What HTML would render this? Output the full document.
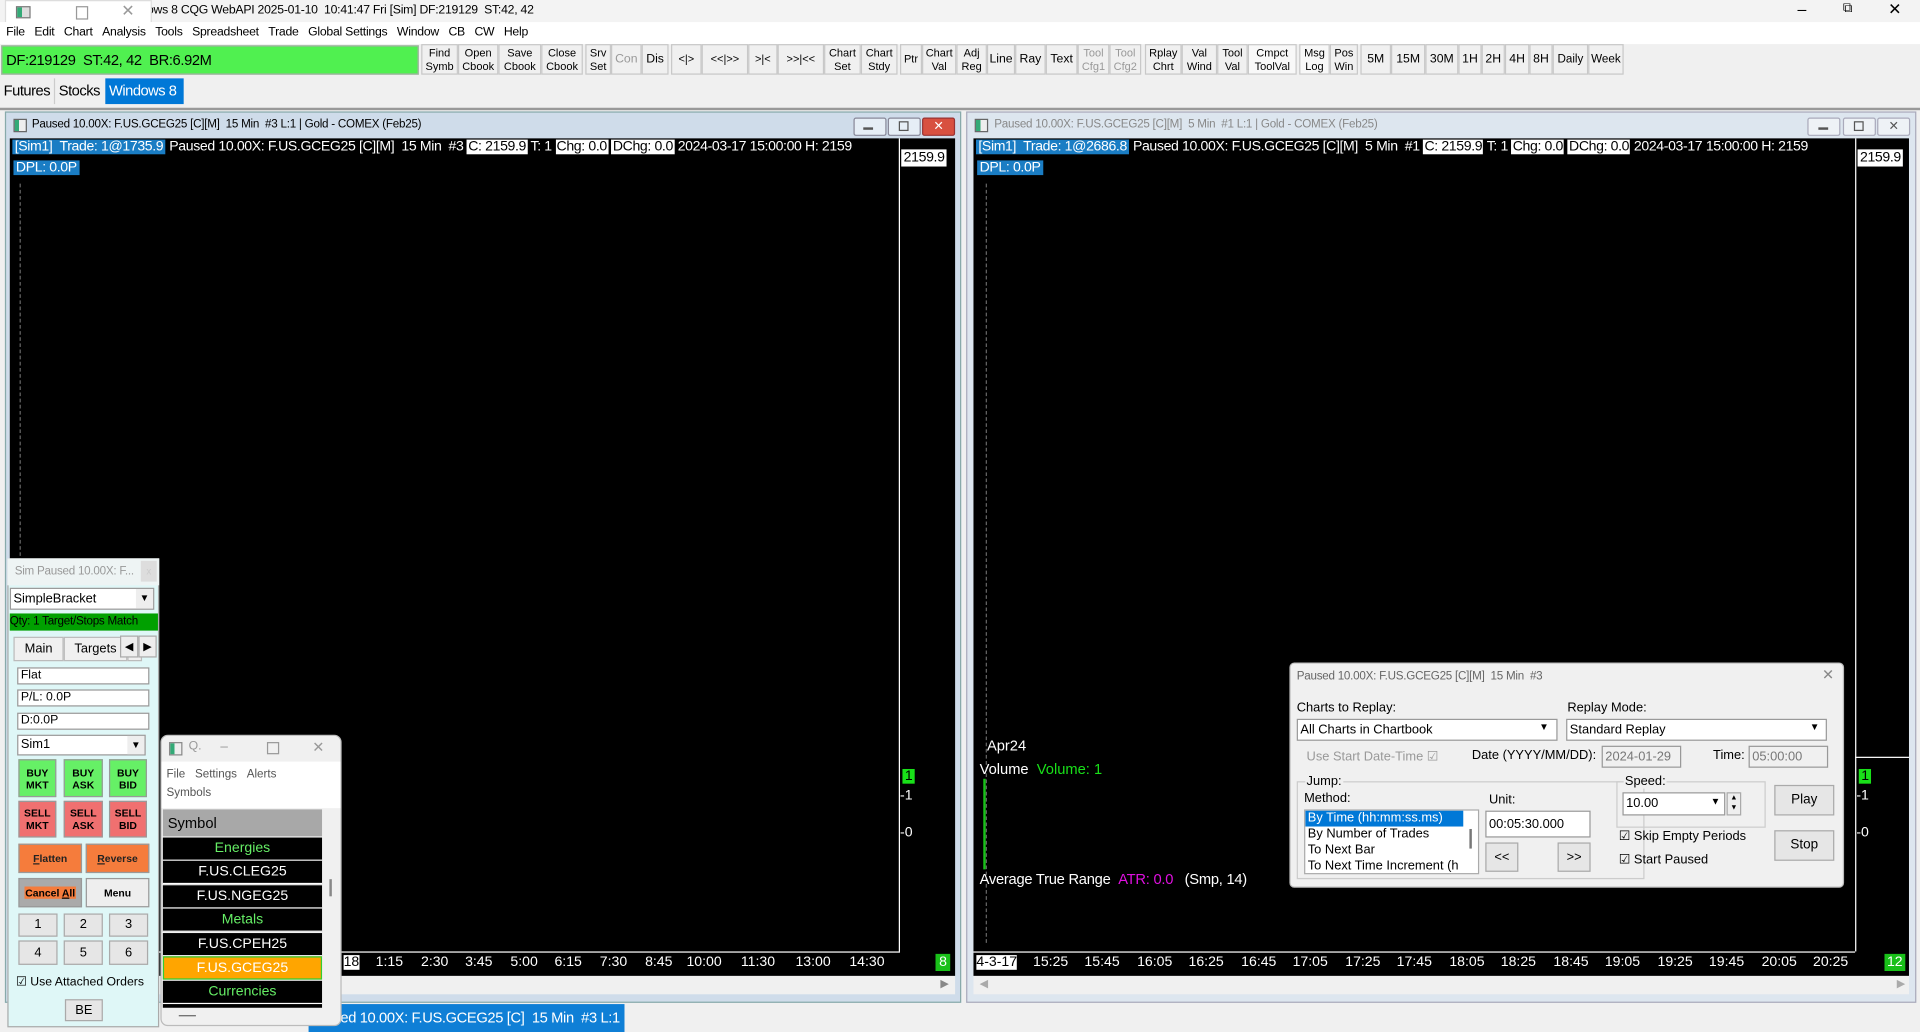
<!DOCTYPE html>
<html><head><meta charset="utf-8"><style>
html,body{margin:0;padding:0;width:1920px;height:1032px;overflow:hidden;background:#f0f0f0}
#w{position:absolute;left:0;top:0;width:1568px;height:843px;transform:scale(1.22449);transform-origin:0 0;font-family:"Liberation Sans",sans-serif;font-size:11px;color:#000;background:#f0f0f0}
.a{position:absolute;white-space:nowrap}
.tb{position:absolute;top:36px;height:25px;border:1px solid #c8c8c8;background:#f0f0f0;font-size:9px;line-height:11px;text-align:center;display:flex;align-items:center;justify-content:center;box-sizing:border-box}
.g{color:#999}
.wb{background:#fff;color:#000;padding:0 1px}
.btn{position:absolute;border:1px solid #999;box-sizing:border-box;text-align:center;font-weight:bold;font-size:8.5px;line-height:10px;display:flex;align-items:center;justify-content:center}
.inp{position:absolute;background:#fff;border:1px solid #999;box-sizing:border-box;font-size:10px;padding-left:2px;line-height:12px}
.sym{position:absolute;left:133px;width:130px;height:19px;background:#000;color:#fff;text-align:center;font-size:11.5px;line-height:19px;border-bottom:1px solid #fff;box-sizing:border-box}
.t{position:absolute;top:780px;color:#fff;font-size:11.5px;transform:translateX(-50%)}
.hd{position:absolute;font-size:11.5px;color:#fff;letter-spacing:-0.3px}
.nb{position:absolute;border:1px solid #aaa;background:#e6e6e6;text-align:center;font-size:10.5px;box-sizing:border-box}
</style></head><body><div id="w">
<!-- title bar -->
<div class="a" style="left:0;top:0;width:1568px;height:18px;background:#f3f3f3"></div>
<div class="a" style="left:120px;top:3px;font-size:10px;letter-spacing:-0.2px">ows 8 CQG WebAPI 2025-01-10 &nbsp;10:41:47 Fri [Sim] DF:219129 &nbsp;ST:42, 42</div>
<div class="a" style="left:1468px;top:0px;font-size:13px">–</div>
<div class="a" style="left:1505px;top:1px;font-size:11px">⧉</div>
<div class="a" style="left:1542px;top:0px;font-size:13px">✕</div>
<div class="a" style="left:4px;top:0;width:118px;height:24px;background:#fff;border:1px solid #ddd;border-radius:0 0 8px 8px"></div>
<div class="a" style="left:13px;top:5px;width:10px;height:8px;border:1px solid #777;background:linear-gradient(90deg,#3a7 40%,#ddd 40%)"></div>
<div class="a" style="left:62px;top:5px;width:8px;height:9px;border:1px solid #999"></div>
<div class="a" style="left:99px;top:1px;color:#999;font-size:13px">✕</div>
<!-- menu -->
<div class="a" style="left:0;top:18px;width:1568px;height:18px;background:#fff"></div>
<div class="a" style="left:5px;top:21px;font-size:10px;letter-spacing:-0.2px">File &nbsp;&nbsp;Edit &nbsp;&nbsp;Chart &nbsp;&nbsp;Analysis &nbsp;&nbsp;Tools &nbsp;&nbsp;Spreadsheet &nbsp;&nbsp;Trade &nbsp;&nbsp;Global Settings &nbsp;&nbsp;Window &nbsp;&nbsp;CB &nbsp;&nbsp;CW &nbsp;&nbsp;Help</div>
<!-- toolbar -->
<div class="a" style="left:1px;top:37px;width:341px;height:24px;background:#50f050;border:1px solid #aaa;box-sizing:border-box;font-size:12px;line-height:22px;padding-left:3px;letter-spacing:-0.3px">DF:219129 &nbsp;ST:42, 42 &nbsp;BR:6.92M</div>
<div class="tb" style="left:344px;width:30px">Find<br>Symb</div>
<div class="tb" style="left:374px;width:33px">Open<br>Cbook</div>
<div class="tb" style="left:407px;width:35px">Save<br>Cbook</div>
<div class="tb" style="left:442px;width:34px">Close<br>Cbook</div>
<div class="tb" style="left:478px;width:21px">Srv<br>Set</div>
<div class="tb g" style="left:499px;width:25px;font-size:10px">Con</div>
<div class="tb" style="left:524px;width:22px;font-size:10px">Dis</div>
<div class="tb" style="left:548px;width:25px">&lt;|&gt;</div>
<div class="tb" style="left:573px;width:38px">&lt;&lt;|&gt;&gt;</div>
<div class="tb" style="left:611px;width:24px">&gt;|&lt;</div>
<div class="tb" style="left:635px;width:38px">&gt;&gt;|&lt;&lt;</div>
<div class="tb" style="left:673px;width:30px">Chart<br>Set</div>
<div class="tb" style="left:703px;width:30px">Chart<br>Stdy</div>
<div class="tb" style="left:735px;width:18px">Ptr</div>
<div class="tb" style="left:753px;width:28px">Chart<br>Val</div>
<div class="tb" style="left:781px;width:25px">Adj<br>Reg</div>
<div class="tb" style="left:806px;width:23px;font-size:10px">Line</div>
<div class="tb" style="left:829px;width:25px;font-size:10px">Ray</div>
<div class="tb" style="left:854px;width:26px;font-size:10px">Text</div>
<div class="tb g" style="left:880px;width:26px">Tool<br>Cfg1</div>
<div class="tb g" style="left:906px;width:26px">Tool<br>Cfg2</div>
<div class="tb" style="left:935px;width:30px">Rplay<br>Chrt</div>
<div class="tb" style="left:965px;width:29px">Val<br>Wind</div>
<div class="tb" style="left:994px;width:25px">Tool<br>Val</div>
<div class="tb" style="left:1019px;width:40px;background:#f8f8f8">Cmpct<br>ToolVal</div>
<div class="tb" style="left:1061px;width:25px;background:#f8f8f8">Msg<br>Log</div>
<div class="tb" style="left:1086px;width:23px">Pos<br>Win</div>
<div class="tb" style="left:1111px;width:25px;font-size:10px">5M</div>
<div class="tb" style="left:1136px;width:28px;font-size:10px">15M</div>
<div class="tb" style="left:1164px;width:27px;font-size:10px">30M</div>
<div class="tb" style="left:1191px;width:19px;font-size:10px">1H</div>
<div class="tb" style="left:1210px;width:19px;font-size:10px">2H</div>
<div class="tb" style="left:1229px;width:20px;font-size:10px">4H</div>
<div class="tb" style="left:1249px;width:19px;font-size:10px">8H</div>
<div class="tb" style="left:1268px;width:29px;font-size:9.5px">Daily</div>
<div class="tb" style="left:1297px;width:29px;font-size:9.5px">Week</div>
<!-- tabs -->
<div class="a" style="left:3px;top:67px;font-size:12px;letter-spacing:-0.4px">Futures</div>
<div class="a" style="left:44px;top:64px;width:1px;height:21px;background:#ccc"></div>
<div class="a" style="left:48px;top:67px;font-size:12px;letter-spacing:-0.4px">Stocks</div>
<div class="a" style="left:86px;top:64px;width:64px;height:21px;background:#0078d7;color:#fff;font-size:12px;line-height:21px;padding-left:3px;box-sizing:border-box;letter-spacing:-0.4px">Windows 8</div>
<div class="a" style="left:0;top:88px;width:1568px;height:2px;background:#999"></div>

<!-- LEFT CHART WINDOW -->
<div class="a" style="left:4px;top:91px;width:779px;height:726px;background:#cfdcea;border:1px solid #8aa"></div>
<div class="a" style="left:11px;top:97px;width:9px;height:9px;border:1px solid #666;background:linear-gradient(90deg,#3a7 40%,#eee 40%)"></div>
<div class="a" style="left:26px;top:96px;font-size:9.5px;letter-spacing:-0.2px">Paused 10.00X: F.US.GCEG25 [C][M] &nbsp;15 Min &nbsp;#3 L:1 | Gold - COMEX (Feb25)</div>
<div class="a" style="left:697px;top:96px;width:25px;height:13px;border:1px solid #889;background:#e6eef6;border-radius:2px"></div>
<div class="a" style="left:725px;top:96px;width:25px;height:13px;border:1px solid #889;background:#e6eef6;border-radius:2px"></div>
<div class="a" style="left:753px;top:96px;width:25px;height:13px;border:1px solid #933;background:#d85040;border-radius:2px;color:#fff;font-size:10px;text-align:center;line-height:13px">✕</div>
<div class="a" style="left:705px;top:104px;width:8px;height:2px;background:#555"></div>
<div class="a" style="left:734px;top:99px;width:6px;height:6px;border:1px solid #555"></div>
<div class="a" style="left:8px;top:113px;width:772px;height:684px;background:#000"></div>
<div class="a" style="left:734px;top:113px;width:1px;height:664px;background:#fff"></div>
<div class="a" style="left:8px;top:777px;width:727px;height:1px;background:#fff"></div>
<div class="a" style="left:16px;top:150px;width:0;height:620px;border-left:1px dashed #666"></div>
<div class="a" style="left:10px;top:113px;width:724px;height:17px;overflow:hidden"><div class="hd" style="left:0;top:1px"><span style="background:#1a7dc4;padding:0 2px">[Sim1] &nbsp;Trade: 1@1735.9</span> Paused 10.00X: F.US.GCEG25 [C][M] &nbsp;15 Min &nbsp;#3 <span class="wb">C: 2159.9</span> T: 1 <span class="wb">Chg: 0.0</span> <span class="wb">DChg: 0.0</span> 2024-03-17 15:00:00 H: 2159</div></div>
<div class="a" style="left:11px;top:131px;font-size:11.5px;color:#fff;background:#1a7dc4;padding:0 2px;letter-spacing:-0.3px">DPL: 0.0P</div>
<div class="a" style="left:736px;top:122px;background:#fff;font-size:11.5px;padding:1px 2px;letter-spacing:-0.3px">2159.9</div>
<div class="a" style="left:737px;top:628px;background:#19e019;font-size:11.5px;padding:0 2px">1</div>
<div class="a" style="left:735px;top:644px;color:#fff;font-size:11.5px">-1</div>
<div class="a" style="left:735px;top:674px;color:#fff;font-size:11.5px">-0</div>
<div class="t" style="left:287px;background:#fff;color:#000">18</div>
<div class="t" style="left:318px">1:15</div><div class="t" style="left:355px">2:30</div><div class="t" style="left:391px">3:45</div><div class="t" style="left:428px">5:00</div><div class="t" style="left:464px">6:15</div><div class="t" style="left:501px">7:30</div><div class="t" style="left:538px">8:45</div><div class="t" style="left:575px">10:00</div><div class="t" style="left:619px">11:30</div><div class="t" style="left:664px">13:00</div><div class="t" style="left:708px">14:30</div>
<div class="a" style="left:764px;top:779px;background:#19c019;color:#fff;font-size:11.5px;padding:1px 3px">8</div>
<div class="a" style="left:8px;top:797px;width:772px;height:15px;background:#f0f0f0"></div>
<div class="a" style="left:768px;top:798px;color:#888;font-size:9px">▶</div>

<!-- RIGHT CHART WINDOW -->
<div class="a" style="left:789px;top:91px;width:774px;height:726px;background:#dde6ef;border:1px solid #aab"></div>
<div class="a" style="left:796px;top:97px;width:9px;height:9px;border:1px solid #666;background:linear-gradient(90deg,#3a7 40%,#eee 40%)"></div>
<div class="a" style="left:812px;top:96px;font-size:9.5px;color:#888;letter-spacing:-0.2px">Paused 10.00X: F.US.GCEG25 [C][M] &nbsp;5 Min &nbsp;#1 L:1 | Gold - COMEX (Feb25)</div>
<div class="a" style="left:1476px;top:96px;width:25px;height:13px;border:1px solid #aab;background:#eef2f6;border-radius:2px"></div>
<div class="a" style="left:1505px;top:96px;width:25px;height:13px;border:1px solid #aab;background:#eef2f6;border-radius:2px"></div>
<div class="a" style="left:1533px;top:96px;width:25px;height:13px;border:1px solid #aab;background:#eef2f6;border-radius:2px;text-align:center;font-size:10px;line-height:13px;color:#555">✕</div>
<div class="a" style="left:1485px;top:104px;width:8px;height:2px;background:#555"></div>
<div class="a" style="left:1514px;top:99px;width:6px;height:6px;border:1px solid #555"></div>
<div class="a" style="left:795px;top:113px;width:764px;height:684px;background:#000"></div>
<div class="a" style="left:1515px;top:113px;width:1px;height:664px;background:#fff"></div>
<div class="a" style="left:795px;top:777px;width:720px;height:1px;background:#fff"></div>
<div class="a" style="left:1515px;top:618px;width:44px;height:1px;background:#fff"></div>
<div class="a" style="left:805px;top:150px;width:0;height:620px;border-left:1px dashed #666"></div>
<div class="a" style="left:797px;top:113px;width:718px;height:17px;overflow:hidden"><div class="hd" style="left:0;top:1px"><span style="background:#1a7dc4;padding:0 2px">[Sim1] &nbsp;Trade: 1@2686.8</span> Paused 10.00X: F.US.GCEG25 [C][M] &nbsp;5 Min &nbsp;#1 <span class="wb">C: 2159.9</span> T: 1 <span class="wb">Chg: 0.0</span> <span class="wb">DChg: 0.0</span> 2024-03-17 15:00:00 H: 2159</div></div>
<div class="a" style="left:798px;top:131px;font-size:11.5px;color:#fff;background:#1a7dc4;padding:0 2px;letter-spacing:-0.3px">DPL: 0.0P</div>
<div class="a" style="left:1517px;top:122px;background:#fff;font-size:11.5px;padding:1px 2px;letter-spacing:-0.3px">2159.9</div>
<div class="a" style="left:806px;top:602px;color:#fff;font-size:12px">Apr24</div>
<div class="a" style="left:800px;top:621px;color:#fff;font-size:12px">Volume &nbsp;<span style="color:#19e019">Volume: 1</span></div>
<div class="a" style="left:803px;top:636px;width:2px;height:74px;background:#19c019"></div>
<div class="a" style="left:800px;top:711px;color:#fff;font-size:12px;letter-spacing:-0.2px">Average True Range &nbsp;<span style="color:#e010e0">ATR: 0.0</span> &nbsp;&nbsp;(Smp, 14)</div>
<div class="a" style="left:1518px;top:628px;background:#19e019;font-size:11.5px;padding:0 2px">1</div>
<div class="a" style="left:1516px;top:644px;color:#fff;font-size:11.5px">-1</div>
<div class="a" style="left:1516px;top:674px;color:#fff;font-size:11.5px">-0</div>
<div class="t" style="left:814px;background:#fff;color:#000">4-3-17</div>
<div class="t" style="left:858px">15:25</div><div class="t" style="left:900px">15:45</div><div class="t" style="left:943px">16:05</div><div class="t" style="left:985px">16:25</div><div class="t" style="left:1028px">16:45</div><div class="t" style="left:1070px">17:05</div><div class="t" style="left:1113px">17:25</div><div class="t" style="left:1155px">17:45</div><div class="t" style="left:1198px">18:05</div><div class="t" style="left:1240px">18:25</div><div class="t" style="left:1283px">18:45</div><div class="t" style="left:1325px">19:05</div><div class="t" style="left:1368px">19:25</div><div class="t" style="left:1410px">19:45</div><div class="t" style="left:1453px">20:05</div><div class="t" style="left:1495px">20:25</div>
<div class="a" style="left:1539px;top:779px;background:#19c019;color:#fff;font-size:11.5px;padding:1px 2px">12</div>
<div class="a" style="left:795px;top:797px;width:764px;height:15px;background:#f0f0f0"></div>
<div class="a" style="left:800px;top:798px;color:#aaa;font-size:9px">◀</div>
<div class="a" style="left:1549px;top:798px;color:#aaa;font-size:9px">▶</div>

<!-- bottom taskbar -->
<div class="a" style="left:252px;top:820px;width:258px;height:23px;background:#0f7fd6;color:#fff;font-size:12px;line-height:23px;padding-left:26px;box-sizing:border-box;letter-spacing:-0.3px;overflow:hidden">ed 10.00X: F.US.GCEG25 [C] &nbsp;15 Min &nbsp;#3 L:1</div>

<!-- REPLAY DIALOG -->
<div class="a" style="left:1053px;top:541px;width:453px;height:184px;background:#f0f0f0;border:1px solid #bbb;border-radius:4px;box-sizing:border-box"></div>
<div class="a" style="left:1059px;top:547px;font-size:9.5px;color:#666;letter-spacing:-0.2px">Paused 10.00X: F.US.GCEG25 [C][M] &nbsp;15 Min &nbsp;#3</div>
<div class="a" style="left:1488px;top:544px;font-size:12px;color:#888">✕</div>
<div class="a" style="left:1059px;top:572px;font-size:10.5px">Charts to Replay:</div>
<div class="a" style="left:1280px;top:572px;font-size:10.5px">Replay Mode:</div>
<div class="inp" style="left:1059px;top:587px;width:213px;height:18px;font-size:10.5px;line-height:16px">All Charts in Chartbook</div>
<div class="a" style="left:1257px;top:589px;font-size:8px">▼</div>
<div class="inp" style="left:1279px;top:587px;width:213px;height:18px;font-size:10.5px;line-height:16px">Standard Replay</div>
<div class="a" style="left:1478px;top:589px;font-size:8px">▼</div>
<div class="a" style="left:1067px;top:612px;font-size:10.5px;color:#999">Use Start Date-Time ☑</div>
<div class="a" style="left:1202px;top:611px;font-size:10.5px">Date (YYYY/MM/DD):</div>
<div class="inp" style="left:1308px;top:609px;width:65px;height:18px;background:#f0f0f0;color:#777;font-size:10.5px;line-height:16px">2024-01-29</div>
<div class="a" style="left:1399px;top:611px;font-size:10.5px">Time:</div>
<div class="inp" style="left:1428px;top:609px;width:65px;height:18px;background:#f0f0f0;color:#777;font-size:10.5px;line-height:16px">05:00:00</div>
<div class="a" style="left:1059px;top:638px;width:284px;height:80px;border:1px solid #ccc;box-sizing:border-box"></div>
<div class="a" style="left:1066px;top:632px;font-size:10.5px;background:#f0f0f0;padding:0 1px">Jump:</div>
<div class="a" style="left:1065px;top:646px;font-size:10.5px">Method:</div>
<div class="a" style="left:1216px;top:647px;font-size:10.5px">Unit:</div>
<div class="a" style="left:1065px;top:661px;width:143px;height:53px;background:#fff;border:1px solid #aaa;box-sizing:border-box;overflow:hidden;font-size:10.5px;line-height:13px">
<div style="background:#0078d7;color:#fff;width:127px;padding-left:2px">By Time (hh:mm:ss.ms)</div><div style="padding-left:2px">By Number of Trades</div><div style="padding-left:2px">To Next Bar</div><div style="padding-left:2px">To Next Time Increment (h</div></div>
<div class="a" style="left:1200px;top:677px;width:2px;height:16px;background:#777"></div>
<div class="inp" style="left:1213px;top:662px;width:86px;height:22px;font-size:10.5px;line-height:20px">00:05:30.000</div>
<div class="nb" style="left:1213px;top:688px;width:27px;height:24px;line-height:22px">&lt;&lt;</div>
<div class="nb" style="left:1272px;top:688px;width:27px;height:24px;line-height:22px">&gt;&gt;</div>
<div class="a" style="left:1320px;top:638px;width:122px;height:38px;border:1px solid #ccc;box-sizing:border-box"></div>
<div class="a" style="left:1326px;top:632px;font-size:10.5px;background:#f0f0f0;padding:0 1px">Speed:</div>
<div class="inp" style="left:1325px;top:647px;width:84px;height:19px;font-size:10.5px;line-height:17px">10.00</div>
<div class="a" style="left:1397px;top:650px;font-size:8px">▼</div>
<div class="a" style="left:1410px;top:647px;width:12px;height:19px;border:1px solid #aaa;background:#eee;box-sizing:border-box;font-size:6px;text-align:center;line-height:8px">▲<br>▼</div>
<div class="nb" style="left:1449px;top:641px;width:49px;height:25px;line-height:23px;font-size:11px">Play</div>
<div class="nb" style="left:1449px;top:678px;width:49px;height:25px;line-height:23px;font-size:11px">Stop</div>
<div class="a" style="left:1322px;top:677px;font-size:10.5px">☑ Skip Empty Periods</div>
<div class="a" style="left:1322px;top:696px;font-size:10.5px">☑ Start Paused</div>

<!-- ORDER PANEL -->
<div class="a" style="left:6px;top:456px;width:124px;height:383px;background:#dff7f7;border:1px solid #aaa;box-sizing:border-box"></div>
<div class="a" style="left:6px;top:456px;width:124px;height:22px;background:#eef4f4"></div>
<div class="a" style="left:12px;top:461px;font-size:9.5px;color:#999;letter-spacing:-0.2px">Sim Paused 10.00X: F...</div>
<div class="a" style="left:115px;top:458px;width:13px;height:17px;background:#ddd;color:#ccc;font-size:8px;text-align:center;line-height:17px">x</div>
<div class="inp" style="left:8px;top:480px;width:118px;height:18px;font-size:10.5px;line-height:16px">SimpleBracket</div>
<div class="a" style="left:111px;top:481px;width:14px;height:16px;background:#eee;font-size:8px;text-align:center;line-height:16px">▼</div>
<div class="a" style="left:8px;top:501px;width:121px;height:14px;background:#00a000;font-size:9.5px;line-height:14px;overflow:hidden;letter-spacing:-0.2px">Qty: 1 Target/Stops Match</div>
<div class="a" style="left:11px;top:520px;width:39px;height:18px;border:1px solid #bbb;background:#f0f0f0;font-size:10.5px;text-align:center;line-height:18px">Main</div>
<div class="a" style="left:52px;top:520px;width:50px;height:18px;border:1px solid #bbb;background:#f0f0f0;font-size:10.5px;text-align:center;line-height:18px">Targets</div>
<div class="a" style="left:104px;top:520px;width:10px;height:18px;border:1px solid #bbb;background:#f0f0f0;font-size:10.5px;line-height:18px">S</div>
<div class="a" style="left:98px;top:519px;width:13px;height:16px;border:1px solid #aaa;background:#eee;font-size:9px;text-align:center;line-height:16px">◀</div>
<div class="a" style="left:113px;top:519px;width:13px;height:16px;border:1px solid #aaa;background:#eee;font-size:9px;text-align:center;line-height:16px">▶</div>
<div class="inp" style="left:14px;top:545px;width:108px;height:14px">Flat</div>
<div class="inp" style="left:14px;top:563px;width:108px;height:14px">P/L: 0.0P</div>
<div class="inp" style="left:14px;top:582px;width:108px;height:14px">D:0.0P</div>
<div class="inp" style="left:14px;top:600px;width:105px;height:17px;font-size:10.5px;line-height:15px">Sim1</div>
<div class="a" style="left:104px;top:601px;width:14px;height:15px;background:#eee;font-size:8px;text-align:center;line-height:15px">▼</div>
<div class="btn" style="left:15px;top:620px;width:31px;height:31px;background:#66f066">BUY<br>MKT</div>
<div class="btn" style="left:52px;top:620px;width:32px;height:31px;background:#66f066">BUY<br>ASK</div>
<div class="btn" style="left:89px;top:620px;width:31px;height:31px;background:#66f066">BUY<br>BID</div>
<div class="btn" style="left:15px;top:654px;width:31px;height:30px;background:#f07070">SELL<br>MKT</div>
<div class="btn" style="left:52px;top:654px;width:32px;height:30px;background:#f07070">SELL<br>ASK</div>
<div class="btn" style="left:89px;top:654px;width:31px;height:30px;background:#f07070">SELL<br>BID</div>
<div class="btn" style="left:15px;top:689px;width:52px;height:24px;background:#f57c3c;color:#222"><u>F</u>latten</div>
<div class="btn" style="left:70px;top:689px;width:52px;height:24px;background:#f57c3c;color:#222"><u>R</u>everse</div>
<div class="btn" style="left:15px;top:717px;width:52px;height:24px;background:#aaa"><span style="background:#f57c3c;padding:0 1px">Cancel <u>A</u>ll</span></div>
<div class="btn" style="left:70px;top:717px;width:52px;height:24px;background:#eee">Menu</div>
<div class="nb" style="left:15px;top:746px;width:32px;height:19px;line-height:17px;font-size:10.5px">1</div>
<div class="nb" style="left:52px;top:746px;width:32px;height:19px;line-height:17px;font-size:10.5px">2</div>
<div class="nb" style="left:89px;top:746px;width:32px;height:19px;line-height:17px;font-size:10.5px">3</div>
<div class="nb" style="left:15px;top:768px;width:32px;height:20px;line-height:18px;font-size:10.5px">4</div>
<div class="nb" style="left:52px;top:768px;width:32px;height:20px;line-height:18px;font-size:10.5px">5</div>
<div class="nb" style="left:89px;top:768px;width:32px;height:20px;line-height:18px;font-size:10.5px">6</div>
<div class="a" style="left:13px;top:797px;font-size:10px">☑ Use Attached Orders</div>
<div class="nb" style="left:53px;top:816px;width:31px;height:18px;line-height:16px;font-size:10.5px">BE</div>

<!-- SYMBOL WINDOW -->
<div class="a" style="left:131px;top:600px;width:148px;height:238px;background:#f0f0f0;border:1px solid #bbb;border-radius:6px;box-sizing:border-box"></div>
<div class="a" style="left:138px;top:606px;width:9px;height:9px;border:1px solid #888;background:linear-gradient(90deg,#3a7 40%,#eee 40%)"></div>
<div class="a" style="left:154px;top:604px;font-size:10px;color:#999">Q.</div>
<div class="a" style="left:180px;top:604px;font-size:11px;color:#999">–</div>
<div class="a" style="left:218px;top:606px;width:8px;height:8px;border:1px solid #999"></div>
<div class="a" style="left:255px;top:603px;font-size:12px;color:#999">✕</div>
<div class="a" style="left:132px;top:622px;width:146px;height:38px;background:#fff"></div>
<div class="a" style="left:136px;top:627px;font-size:9.5px;color:#555">File &nbsp;&nbsp;Settings &nbsp;&nbsp;Alerts</div>
<div class="a" style="left:136px;top:642px;font-size:9.5px;color:#555">Symbols</div>
<div class="a" style="left:133px;top:661px;width:130px;height:22px;background:#a8a8a8;font-size:12px;line-height:22px;padding-left:4px;box-sizing:border-box">Symbol</div>
<div class="sym" style="top:684px;color:#66ee66">Energies</div>
<div class="sym" style="top:703px">F.US.CLEG25</div>
<div class="sym" style="top:723px">F.US.NGEG25</div>
<div class="sym" style="top:742px;color:#66ee66">Metals</div>
<div class="sym" style="top:762px">F.US.CPEH25</div>
<div class="sym" style="top:781px;background:#ffa500;border:1px solid #3c3">F.US.GCEG25</div>
<div class="sym" style="top:801px;color:#66ee66">Currencies</div>
<div class="a" style="left:133px;top:820px;width:130px;height:3px;background:#000"></div>
<div class="a" style="left:269px;top:718px;width:2px;height:14px;background:#888"></div>
<div class="a" style="left:146px;top:829px;width:14px;height:1px;background:#666"></div>
</div></body></html>
